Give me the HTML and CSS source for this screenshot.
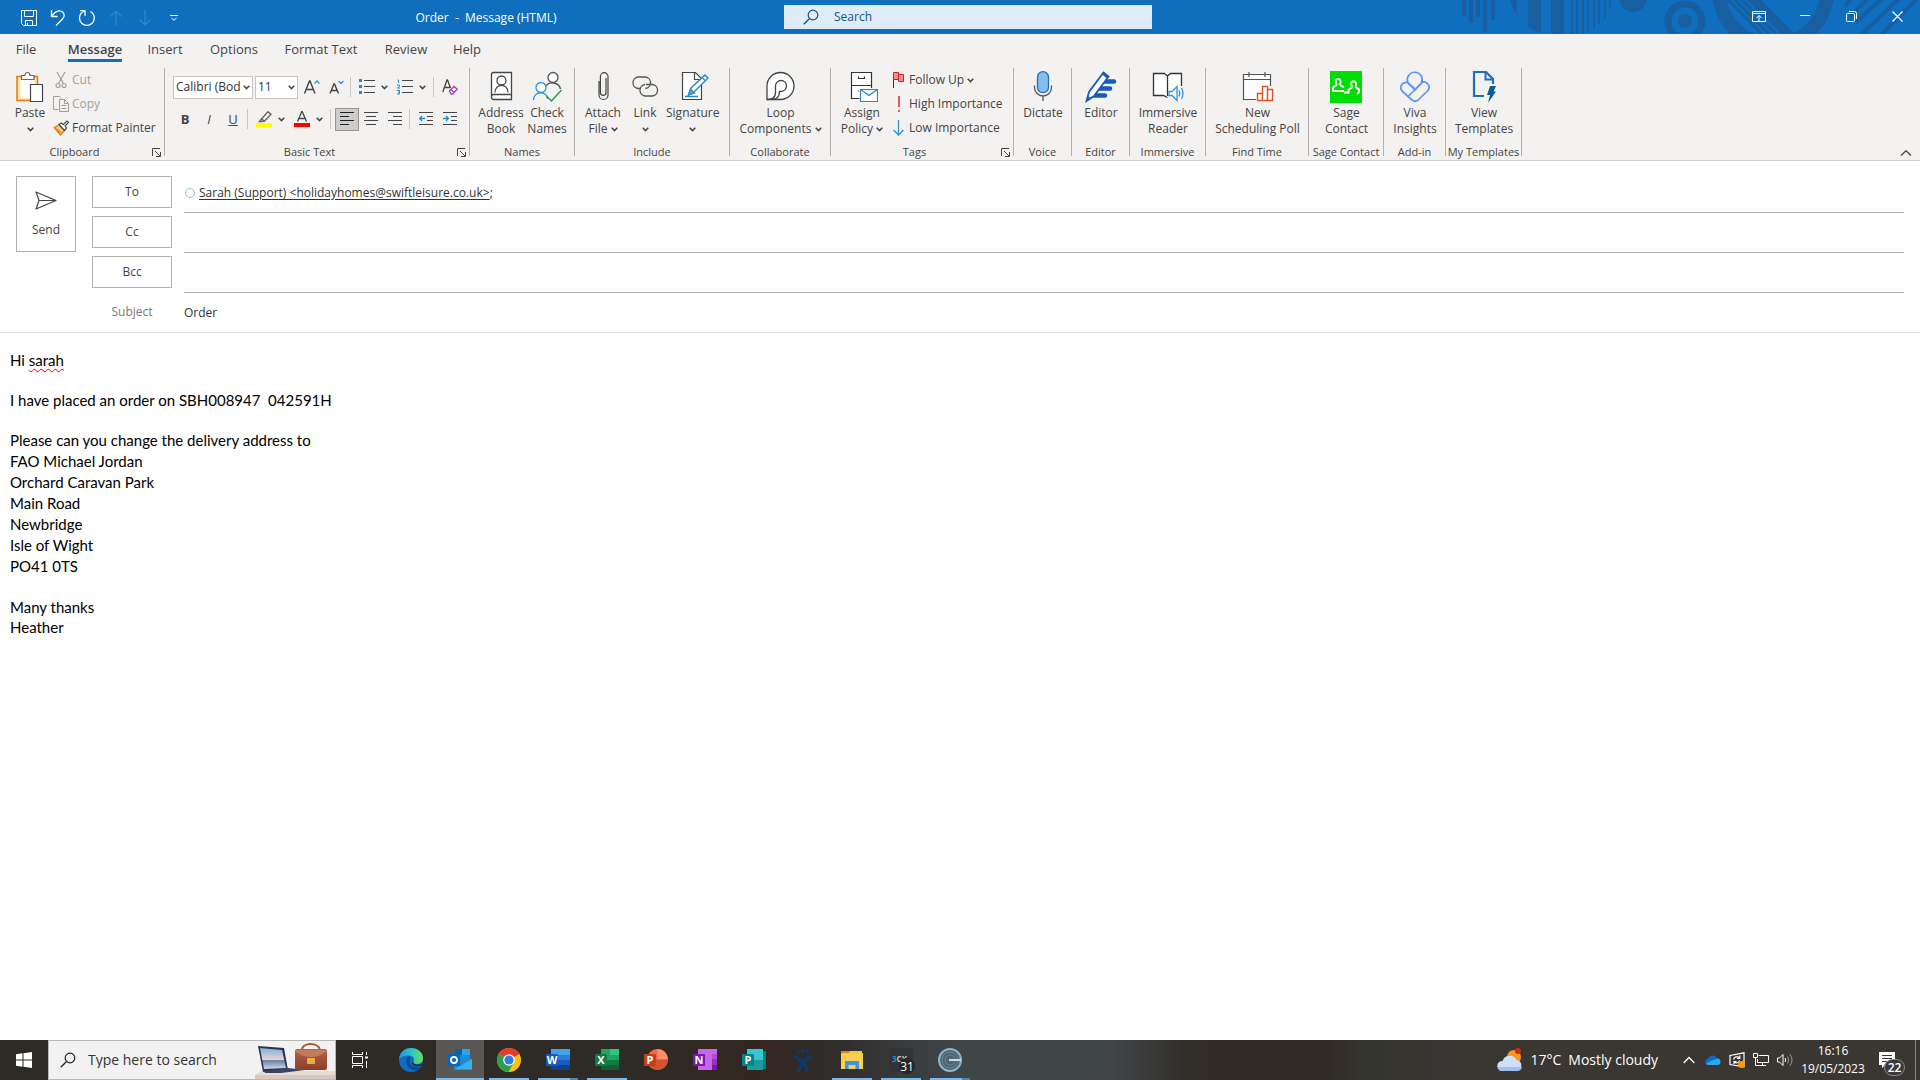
FILE: index.html
```html
<!DOCTYPE html>
<html lang="en">
<head>
<meta charset="utf-8">
<title>Order - Message (HTML)</title>
<link rel="stylesheet" href="styles.css">
</head>
<body>
<svg class="defs" aria-hidden="true">
  <symbol id="chev" viewBox="0 0 7 5"><path d="M.7.8 3.5 3.6 6.3.8" fill="none" stroke="#444" stroke-width="1.5"/></symbol>
  <symbol id="launch" viewBox="0 0 9 9"><path d="M.5 8V.5H8M3 3l5 5M8.500 4v4.500H4" fill="none" stroke="#444"/></symbol>
  <symbol id="lens" viewBox="0 0 16 16"><circle cx="10" cy="6" r="4.800" fill="none" stroke="currentColor" stroke-width="1.200"/><path d="M6.500 9.500.8 15.200" stroke="currentColor" stroke-width="1.300"/></symbol>
</svg>

<header class="titlebar">
  <div class="title-left">
    <div class="qat">
      <button aria-label="Save"><svg width="16" height="16" viewBox="0 0 16 16" fill="none" stroke="#fff"><path d="M.5.5h15v15h-13l-2-2zM3.500.5v6h9v-6M4.500 15.500v-5h7v5M6.500 15v-2"/></svg></button>
      <button aria-label="Undo"><svg width="16" height="16" viewBox="0 0 16 16" fill="none" stroke="#fff" stroke-width="1.300"><path d="M1.500 0v6.500h6M2 6C5 1 10-.5 12.800 2.200c2.500 2.600 1.200 5.500-1 7.500L6 15.500"/></svg></button>
      <button aria-label="Redo"><svg width="18" height="16" viewBox="0 0 18 16" fill="none" stroke="#fff" stroke-width="1.300"><path d="M2 .7h5v5M7 1C3 2.200 1.500 5 1.500 8a7.300 7.300 0 0 0 14.800 0c0-3-1.500-5-3.800-6.500"/></svg></button>
      <button aria-label="Previous item" disabled><svg width="14" height="16" viewBox="0 0 14 16" fill="none" stroke="#2b88d8" stroke-width="1.200"><path d="M7 16V1M1.500 6.500 7 1l5.500 5.500"/></svg></button>
      <button aria-label="Next item" disabled><svg width="14" height="16" viewBox="0 0 14 16" fill="none" stroke="#2b88d8" stroke-width="1.200"><path d="M7 0v15M1.500 9.500 7 15l5.500-5.500"/></svg></button>
      <button aria-label="Customize Quick Access Toolbar"><svg width="8" height="8" viewBox="0 0 8 8" fill="none" stroke="#fff"><path d="M0 1.500h8M1.500 4 4 6.300 6.500 4"/></svg></button>
    </div>
    <h1 class="title">Order&nbsp; -&nbsp; Message (HTML)</h1>
  </div>
  <label class="search"><svg width="16" height="16"><use href="#lens"/></svg><input type="text" placeholder="Search" aria-label="Search"></label>
  <div class="title-right">
    <svg class="decor" width="480" height="34" viewBox="0 0 480 34" aria-hidden="true">
      <clipPath id="ringc"><circle cx="333" cy="-9" r="47"/></clipPath>
      <g fill="#185fa2">
        <path d="M22 0h4v16h-4zM29 0h4v23h-4zM36 0h4v17h-4zM43 0h4v32h-4zM51 0h4v20h-4zM70 0h7v15Q72 8 70 0zM88 0h13v33q-9-3-13-7zM111 0h13v34h-13z"/>
        <path d="M131 0h2v34h-2zM136 0h2v34h-2zM142 0h2v33h-2zM147 0h2v31h-2zM153 0h2v28h-2zM158 0h2v24h-2zM164 0h2v18h-2zM169 0h2v9h-2z"/>
        <circle cx="193" cy="-2" r="14"/><circle cx="245" cy="21" r="7"/>
      </g>
      <circle cx="245" cy="21" r="17" fill="none" stroke="#185fa2" stroke-width="7"/>
      <circle cx="333" cy="-9" r="54" fill="none" stroke="#185fa2" stroke-width="14"/>
      <g clip-path="url(#ringc)" stroke="#185fa2"><path stroke-width="3" d="M280-8l50 50M287-8l50 50M294-8l50 50"/><path stroke-width="10" d="M306-8l50 50"/></g>
      <path stroke="#185fa2" stroke-width="4" d="M416-8l-11 14M436-10l-26 27M452-10l-36 32M468-10l-50 48M486-10l-48 48"/>
    </svg>
    <div class="winctl">
      <button aria-label="Ribbon display options"><svg width="14" height="11" viewBox="0 0 14 11" fill="none" stroke="#fff"><path d="M.5.5h13v10H.5zM.5 2.500h13M7 10V4.500M4.500 7 7 4.500 9.500 7"/></svg></button>
      <button aria-label="Minimize"><svg width="10" height="10" viewBox="0 0 10 10" stroke="#fff"><path d="M0 4.500h10"/></svg></button>
      <button aria-label="Restore"><svg width="11" height="11" viewBox="0 0 11 11" fill="none" stroke="#fff"><rect x=".5" y="2.500" width="8" height="8" rx="1"/><path d="M3 .5h5.500a2 2 0 0 1 2 2V8"/></svg></button>
      <button aria-label="Close"><svg width="11" height="11" viewBox="0 0 11 11" stroke="#fff" stroke-width="1.200"><path d="M.5.5l10 10M10.500.5l-10 10"/></svg></button>
    </div>
  </div>
</header>

<nav class="tabs" aria-label="Ribbon tabs">
  <button>File</button><button class="active"><span>Message</span></button><button>Insert</button><button>Options</button><button>Format Text</button><button>Review</button><button>Help</button>
</nav>

<section class="ribbon" aria-label="Message ribbon">
  <div class="group g-clip">
    <div class="tools">
      <button class="big paste">
        <svg width="32" height="32" viewBox="0 0 32 32"><path d="M3 5.500h20.500V29.500H3z" fill="#fbe3b0" stroke="#e07b10" stroke-width="1.500"/><path d="M6.500 8h14v19h-14z" fill="#fff"/><path d="M7.500 8.500V4.500h3.500c0-4 5-4 5 0h4v4z" fill="#fff" stroke="#666" stroke-width="1.200"/><path d="M16.500 13.500h12v17h-12z" fill="#fff" stroke="#444" stroke-width="1.200"/></svg>
        <span>Paste</span><span><svg class="cv"><use href="#chev"/></svg></span></button>
      <div class="stack">
        <button class="row" disabled><svg width="16" height="16" viewBox="0 0 16 16" fill="none" stroke="#a19f9d" stroke-width="1.200"><path d="M4 0l6.500 11.500M12 0 5.500 11.500"/><circle cx="5" cy="13.500" r="2"/><circle cx="11" cy="13.500" r="2"/></svg>Cut</button>
        <button class="row" disabled><svg width="16" height="16" viewBox="0 0 16 16" fill="none" stroke="#a19f9d"><path d="M5.500 13.500h-5V.5h6l2 2M6.500 3.500h5l4 4v8h-9zM11.500 3.500v4h4M8.500 9.500h5M8.500 12.500h5"/></svg>Copy</button>
        <button class="row"><svg width="16" height="16" viewBox="0 0 16 16"><path d="M1 7.500 6 5l5.500 5.500L7.500 15z" fill="#fbc58f" stroke="#e07b10" stroke-width="1.200"/><path d="M4 8.500l4.500 4.500M3 9l4 4" stroke="#e07b10"/><path d="M6 4.500 8.500 3l1.800 1.700L14 1l1.500 1.300L12 6l1.500 2-2 2.500z" fill="#fff" stroke="#444" stroke-width="1.200"/></svg>Format Painter</button>
      </div>
    </div>
    <div class="cap"><span>Clipboard</span><button aria-label="Clipboard options"><svg width="9" height="9"><use href="#launch"/></svg></button></div>
  </div>

  <div class="group g-basic">
    <div class="tools fmt">
      <div class="line">
        <span class="combo face"><select aria-label="Font"><option>Calibri (Bod</option></select><svg class="cv"><use href="#chev"/></svg></span>
        <span class="combo size"><select aria-label="Font size"><option>11</option></select><svg class="cv"><use href="#chev"/></svg></span>
        <button class="ib" aria-label="Grow font"><svg width="18" height="16" viewBox="0 0 18 16" fill="none"><path d="M1.500 14.500 6.500 2h.5l5 12.500M3 10.500h7.500" stroke="#444" stroke-width="1.400"/><path d="M11.500 4.500 14 2l2.500 2.500" stroke="#2b95d6" stroke-width="1.400"/></svg></button>
        <button class="ib" aria-label="Shrink font"><svg width="18" height="16" viewBox="0 0 18 16" fill="none"><path d="M3 14.500 7 5h.5l4 9.500M4.500 11.500H10" stroke="#444" stroke-width="1.400"/><path d="M11.500 2 14 4.500 16.500 2" stroke="#2b95d6" stroke-width="1.400"/></svg></button>
        <i class="sep"></i>
        <button class="ib" aria-label="Bullets"><svg width="16" height="16" viewBox="0 0 16 16"><path d="M0 0h3v3H0zM0 6h3v3H0zM0 12h3v3H0z" fill="#2b88c8"/><path d="M5 1.500h11M5 7.500h11M5 13.500h11" stroke="#444"/></svg></button>
        <button class="ch" aria-label="Bullet styles"><svg class="cv"><use href="#chev"/></svg></button>
        <button class="ib" aria-label="Numbering"><svg width="16" height="16" viewBox="0 0 16 16" fill="none"><path d="M.5 1h1v3M0 6h2.500v1.500L.5 9H3M0 11.500h2.500v3.500H0M1 13h1.500" stroke="#2b88c8"/><path d="M5 1.500h11M5 7.500h11M5 13.500h11" stroke="#444"/></svg></button>
        <button class="ch" aria-label="Number styles"><svg class="cv"><use href="#chev"/></svg></button>
        <i class="sep"></i>
        <button class="ib" aria-label="Clear formatting"><svg width="16" height="16" viewBox="0 0 16 16" fill="none"><path d="M.8 13 5 1h.5l3 8M2.300 8.500h6" stroke="#444" stroke-width="1.300"/><path d="M7.500 12 12 7.500l3.200 2.700-4.500 4.800H9zM9 10.500l3 3" fill="#fff" stroke="#9a3fb0" stroke-width="1.300"/></svg></button>
      </div>
      <div class="line">
        <button class="ib"><b>B</b></button><button class="ib"><em>I</em></button><button class="ib"><u>U</u></button>
        <i class="sep"></i>
        <button class="ib" aria-label="Highlight"><svg width="16" height="16" viewBox="0 0 16 16"><path d="M5.500 8 12 .8l3 2.500L8.500 10zM5.500 8 3.500 10.500H6l2.500-.5" fill="#fff" stroke="#666" stroke-width="1.500"/><path d="M0 12h16v4H0z" fill="#ff0"/></svg></button>
        <button class="ch" aria-label="Highlight colours"><svg class="cv"><use href="#chev"/></svg></button>
        <button class="ib" aria-label="Font colour"><svg width="16" height="16" viewBox="0 0 16 16"><path d="M3.500 10.500 7.800.5h.4l4.300 10M5 7.500h6" fill="none" stroke="#444" stroke-width="1.300"/><path d="M0 12h16v4H0z" fill="#f00"/></svg></button>
        <button class="ch" aria-label="Font colours"><svg class="cv"><use href="#chev"/></svg></button>
        <i class="sep"></i>
        <button class="ib on" aria-label="Align left"><svg width="14" height="14" viewBox="0 0 14 14" stroke="#222"><path d="M0 .5h14M0 4.500h9M0 8.500h14M0 12.500h9"/></svg></button>
        <button class="ib" aria-label="Align centre"><svg width="14" height="14" viewBox="0 0 14 14" stroke="#444"><path d="M0 .5h14M2 4.500h10M0 8.500h14M2 12.500h10"/></svg></button>
        <button class="ib" aria-label="Align right"><svg width="14" height="14" viewBox="0 0 14 14" stroke="#444"><path d="M0 .5h14M5 4.500h9M0 8.500h14M5 12.500h9"/></svg></button>
        <i class="sep"></i>
        <button class="ib" aria-label="Decrease indent"><svg width="14" height="14" viewBox="0 0 14 14" fill="none" stroke="#444"><path d="M0 .5h14M8 4.500h6M8 8.500h6M0 12.500h14"/><path d="M6 6.500H1M3 4 .7 6.500 3 9" stroke="#2b88c8" stroke-width="1.300"/></svg></button>
        <button class="ib" aria-label="Increase indent"><svg width="14" height="14" viewBox="0 0 14 14" fill="none" stroke="#444"><path d="M0 .5h14M8 4.500h6M8 8.500h6M0 12.500h14"/><path d="M0 6.500h5M3 4l2.300 2.500L3 9" stroke="#2b88c8" stroke-width="1.300"/></svg></button>
      </div>
    </div>
    <div class="cap"><span>Basic Text</span><button aria-label="Basic text options"><svg width="9" height="9"><use href="#launch"/></svg></button></div>
  </div>

  <div class="group g-names">
    <div class="tools">
      <button class="big"><svg width="32" height="32" viewBox="0 0 32 32" fill="none" stroke="#444" stroke-width="1.300"><path d="M6.500 26V3.500q0-2 2-2h18v27h-18q-2 0-2-2.500t2-2.500h18" fill="#fff"/><circle cx="16.500" cy="9.500" r="4.500"/><path d="M10 21.500c0-9.500 13-9.500 13 0"/></svg><span>Address</span><span>Book</span></button>
      <button class="big"><svg width="32" height="32" viewBox="0 0 32 32" fill="none" stroke="#555" stroke-width="1.300"><circle cx="22" cy="6.500" r="5" fill="#fff"/><path d="M15 15c3-5 13-4 14.500 3"/><circle cx="10" cy="16.500" r="5" fill="#fff" stroke="#2b95d6"/><path d="M2.500 29c0-9.500 14-9.500 14-1" stroke="#2b95d6"/><path d="M15.500 25l5 5L30.500 19" stroke="#2ca04a" stroke-width="1.500"/></svg><span>Check</span><span>Names</span></button>
    </div>
    <div class="cap"><span>Names</span></div>
  </div>

  <div class="group g-include">
    <div class="tools">
      <button class="big"><svg width="32" height="32" viewBox="0 0 32 32" fill="none" stroke="#444" stroke-width="1.200"><path d="M19 7v14.500a2.800 2.800 0 0 1-5.600 0V5.500a3.800 3.800 0 0 1 7.600 0V24a4.500 4.500 0 0 1-9 0V10"/></svg><span>Attach</span><span>File <svg class="cv"><use href="#chev"/></svg></span></button>
      <button class="big"><svg width="32" height="32" viewBox="0 0 32 32" fill="none" stroke="#555" stroke-width="1.300"><path d="M12 17.500H9a5.800 5.800 0 0 1 0-11.500h7.500a5.800 5.800 0 0 1 0 11.500"/><path d="M17 13.500h6.500a5.800 5.800 0 0 1 0 11.500H16a5.800 5.800 0 0 1 0-11.500"/></svg><span>Link</span><span><svg class="cv"><use href="#chev"/></svg></span></button>
      <button class="big"><svg width="32" height="32" viewBox="0 0 32 32" fill="none" stroke="#444" stroke-width="1.200"><path d="M5.500 1.500h13l6 6v21h-19z" fill="#fff"/><path d="M17.500 1.500v7h6"/><path d="M8 25.500h13" stroke="#2b88c8" stroke-width="1.500"/><path d="M11.500 24l2.500-7L28 4l3 3-14 14z" fill="#fff" stroke="#2b88c8" stroke-width="1.500"/><path d="M11.500 24l2-6 4 4z" fill="#5aa7dc" stroke="#2b88c8"/><path d="M25.500 7l2.500 2.500" stroke="#2b88c8"/></svg><span>Signature</span><span><svg class="cv"><use href="#chev"/></svg></span></button>
    </div>
    <div class="cap"><span>Include</span></div>
  </div>

  <div class="group g-loop">
    <div class="tools mid">
      <button class="big"><svg width="32" height="32" viewBox="0 0 32 32" fill="none" stroke="#444" stroke-width="1.300"><path d="M2 28.500V15a13.500 13.500 0 1 1 13.500 13.500z" fill="#fff"/><path d="M2 28.500c6 0 8.500-2 8.500-7V15a5.500 5.500 0 1 1 5.500 5.500h-1.500c0 5-3 8-8 8"/></svg><span>Loop</span><span>Components <svg class="cv"><use href="#chev"/></svg></span></button>
    </div>
    <div class="cap"><span>Collaborate</span></div>
  </div>

  <div class="group g-tags">
    <div class="tools">
      <button class="big policy"><svg width="32" height="32" viewBox="0 0 32 32" fill="none" stroke="#333" stroke-width="1.200"><path d="M25.500 17V1.500h-20v26h8" fill="#fff"/><path d="M5.500 14.500h20M12.500 5.500v2h6v-2M12.500 19.500v1"/><path d="M14.500 18.500h17v12h-17zM14.500 18.500l8.500 6 8.500-6" fill="#fff" stroke="#2b88c8"/></svg><span>Assign</span><span>Policy <svg class="cv"><use href="#chev"/></svg></span></button>
      <div class="stack">
        <button class="row"><svg width="16" height="16" viewBox="0 0 16 16"><path d="M3.500 16V1" stroke="#333"/><path d="M3.500.5h5v2h5v7h-5v-2h-5z" fill="#f98b90" stroke="#d6201f"/><path d="M8.500 2v6" stroke="#d6201f"/></svg>Follow Up <svg class="cv"><use href="#chev"/></svg></button>
        <button class="row"><svg width="16" height="16" viewBox="0 0 16 16"><path d="M8 0h2v11H8zM8 14h2v2H8z" fill="#e8565a"/></svg>High Importance</button>
        <button class="row"><svg width="16" height="16" viewBox="0 0 16 16" fill="none" stroke="#2b95d6" stroke-width="1.300"><path d="M8.500 0v15M3.500 10l5 5 5-5"/></svg>Low Importance</button>
      </div>
    </div>
    <div class="cap"><span>Tags</span><button aria-label="Tag options"><svg width="9" height="9"><use href="#launch"/></svg></button></div>
  </div>

  <div class="group g-voice">
    <div class="tools mid"><button class="big"><svg width="32" height="32" viewBox="0 0 32 32"><rect x="10.500" y=".7" width="11" height="21" rx="5.500" fill="#83beec" stroke="#1a70c0" stroke-width="1.300"/><path d="M7.500 14.500v2a8.500 8.500 0 0 0 17 0v-2M16 25v5" fill="none" stroke="#555" stroke-width="1.300"/></svg><span>Dictate</span></button></div>
    <div class="cap"><span>Voice</span></div>
  </div>
  <div class="group g-editor">
    <div class="tools mid"><button class="big"><svg width="32" height="32" viewBox="0 0 32 32"><path d="M17 10.500h12M14 17.500h11M9 24.500h11" stroke="#185abd" stroke-width="4.500" stroke-linecap="round"/><path d="M1.500 30 4 21 18.500 1.500l5 4L9 25z" fill="#fff" stroke="#185abd" stroke-width="1.800"/><path d="M18 1l5.500 4.500L22 7.500 16.500 3zM1.500 30l1.500-5 3 2.500z" fill="#185abd"/></svg><span>Editor</span></button></div>
    <div class="cap"><span>Editor</span></div>
  </div>
  <div class="group g-imm">
    <div class="tools mid"><button class="big"><svg width="32" height="32" viewBox="0 0 32 32" fill="none" stroke="#333" stroke-width="1.300"><path d="M29.500 15V2.500h-11L15.500 5l-3-2.500H1.500v22h10l4 2" fill="#fff"/><path d="M15.500 5v20"/><path d="M17 20.500h3l5-5v14l-5-5h-3z" fill="#fff" stroke="#2b95d6"/><path d="M27 19.500q1.500 3 0 6M29.500 17q3 5.500 0 11" stroke="#2b95d6"/></svg><span>Immersive</span><span>Reader</span></button></div>
    <div class="cap"><span>Immersive</span></div>
  </div>
  <div class="group g-find">
    <div class="tools mid"><button class="big"><svg width="32" height="32" viewBox="0 0 32 32" fill="none" stroke="#555" stroke-width="1.200"><path d="M14 28.500H1.500v-25h27V15" fill="#fff"/><path d="M1.500 8.500h27M7 1v5M23 1v5"/><path d="M15.500 22.500h5v7h-5zM20.500 15.500h5v14h-5zM25.500 18.500h5v11h-5z" fill="#fff" stroke="#e0501e" stroke-width="1.400"/></svg><span>New</span><span>Scheduling Poll</span></button></div>
    <div class="cap"><span>Find Time</span></div>
  </div>
  <div class="group g-sage">
    <div class="tools mid"><button class="big"><svg width="32" height="32" viewBox="0 0 32 32"><path d="M0 0h32v32H0z" fill="#00dc06"/><path d="M14 20H3v-2.500q0-2 3-3c1-.5.5-1.500 0-2.500-2-5.500 5.500-5.500 4.500 0-.5 1.500-1 2 .5 2.700q2 .5 2.500 2.300M14 21.500h4.500v-2q.5-2 3-2.700c1.200-.5.5-1.500 0-2.500-2-5.500 5.500-5.500 4.500 0-.5 1.500-1 2 .5 2.700 3.500 1 3.500 4 .5 6" fill="none" stroke="#fff" stroke-width="1.900"/></svg><span>Sage</span><span>Contact</span></button></div>
    <div class="cap"><span>Sage Contact</span></div>
  </div>
  <div class="group g-viva">
    <div class="tools mid"><button class="big"><svg width="32" height="32" viewBox="0 0 32 32" fill="none" stroke="#5b95f8" stroke-width="1.700" stroke-linejoin="round"><path d="M9 12a7.500 7.500 0 1 1 13.500 0l-6.500 7z"/><path d="M9 11.500c-6-1-9.500 5-5.500 9l9.500 8.500q3 2.500 6 0l9-8.500c5-5 0-11.500-6-9"/><path d="M9 25.500 22.500 12M9 12l7 6"/></svg><span>Viva</span><span>Insights</span></button></div>
    <div class="cap"><span>Add-in</span></div>
  </div>
  <div class="group g-view">
    <div class="tools mid"><button class="big"><svg width="32" height="32" viewBox="0 0 32 32"><path d="M16 25H6V1h12l7 7v5" fill="none" stroke="#1b6fbe" stroke-width="2.200"/><path d="M17.500 1v7.500H25" fill="none" stroke="#1b6fbe" stroke-width="2"/><path d="M22 15h6l-2.500 5.500H28L20 32l2-8h-3z" fill="#0c5a9e"/></svg><span>View</span><span>Templates</span></button></div>
    <div class="cap"><span>My Templates</span></div>
  </div>
  <button class="collapse" aria-label="Collapse the ribbon"><svg width="12" height="6" viewBox="0 0 12 6" fill="none" stroke="#444" stroke-width="1.300"><path d="M1 5.500 6 .8l5 4.700"/></svg></button>
</section>

<section class="envelope" aria-label="Message header">
  <button class="send"><svg width="22" height="19" viewBox="0 0 22 19" fill="none" stroke="#444" stroke-width="1.200" stroke-linejoin="round"><path d="M1 1l20 8.500L1 18l3-8.500zM4 9.500h17"/></svg>Send</button>
  <div class="fields">
    <div class="field"><button class="pick">To</button><div class="value"><i class="presence"></i><a href="#">Sarah (Support) &lt;holidayhomes@swiftleisure.co.uk&gt;</a>;</div></div>
    <div class="field"><button class="pick">Cc</button><input class="value" type="text" aria-label="Cc"></div>
    <div class="field"><button class="pick">Bcc</button><input class="value" type="text" aria-label="Bcc"></div>
    <div class="field subject"><label for="subject">Subject</label><input id="subject" class="value" type="text" value="Order"></div>
  </div>
</section>

<main class="message" contenteditable="true" spellcheck="false">
  <p>Hi <span class="misspelt">sarah</span></p>
  <p>I have placed an order on SBH008947&nbsp; 042591H</p>
  <p class="address">Please can you change the delivery address to<br>FAO Michael Jordan<br>Orchard Caravan Park<br>Main Road<br>Newbridge<br>Isle of Wight<br>PO41 0TS</p>
  <p>Many thanks<br>Heather</p>
</main>

<footer class="taskbar">
  <button class="tb" aria-label="Start"><svg width="16" height="16" viewBox="0 0 16 16" fill="#fff"><path d="M0 2.200 6.500 1.300V7.500H0zM7.500 1.200 16 0v7.500H7.500zM0 8.500h6.500v6.200L0 13.800zM7.500 8.500H16V16l-8.500-1.200z"/></svg></button>
  <label class="tbsearch"><svg width="16" height="16"><use href="#lens"/></svg><input type="text" placeholder="Type here to search" aria-label="Type here to search">
    <svg class="art" width="80" height="38" viewBox="0 0 80 38" aria-hidden="true"><defs><linearGradient id="sky" x2="0" y2="1"><stop stop-color="#7fb0de"/><stop offset=".55" stop-color="#e9d3d0"/><stop offset=".6" stop-color="#67809e"/><stop offset="1" stop-color="#cfdcea"/></linearGradient><linearGradient id="bag" x2="0" y2="1"><stop stop-color="#b5654a"/><stop offset="1" stop-color="#8a3f2a"/></linearGradient></defs><path d="M0 34l6-4h74v8H0z" fill="#e6dcd4"/><path d="M0 34h80v4H0z" fill="#d9c9bd"/><path d="M3 5l26 2 4 22-25 2z" fill="#2c3352"/><path d="M5 7l22 2 4 18-22 1z" fill="url(#sky)"/><path d="M9 30l24-3 17 2-24 3H10z" fill="#3b4266"/><path d="M47 9c0-8 17-8 18 0" fill="none" stroke="#a5573a" stroke-width="2"/><rect x="40" y="8" width="32" height="21" rx="2" fill="url(#bag)"/><path d="M40 10q16 12 32 0v-1H40z" fill="#c47a5c"/><rect x="52" y="17" width="8" height="6" rx="1" fill="#e3b14c"/></svg>
  </label>
  <button class="tb view" aria-label="Task view"><svg width="16" height="16" viewBox="0 0 16 16" fill="none" stroke="#fff"><path d="M.5 0v2.500h10V0M.5 16v-2.500h10V16M.5 4.500h10v7H.5zM14.500 0v3M14.500 9v7"/><path d="M13 4.500h3v2h-3z" fill="#fff" stroke="none"/></svg></button>
  <div class="apps">
    <button class="tb" aria-label="Edge"><svg width="24" height="24" viewBox="0 0 24 24"><defs><linearGradient id="e1"><stop stop-color="#2196e8"/><stop offset=".6" stop-color="#34c6c0"/><stop offset="1" stop-color="#6fe04a"/></linearGradient></defs><circle cx="12" cy="12" r="12" fill="#0f6cc0"/><path d="M0 11C1 3 7 0 12 0c7 0 12 4.500 12 10 0 4-3 6-6.500 6-2.500 0-3.500-1-3-2 1-1 1.200-6-4-6.500C6 7 2 9 0 11z" fill="url(#e1)"/><path d="M10 8c-5 3-3 13 5 14 3 0 6-2 7-4-6 2.500-13 0-11-7q.5-2-1-3z" fill="#0b4a94"/><path d="M14.500 14c-.5 2 3 3.500 9 1.500l-1 2c-5 1.500-9 .5-10-3z" fill="#2e2b28"/></svg></button>
    <button class="tb current" aria-label="Outlook"><svg width="24" height="24" viewBox="0 0 24 24"><path d="M7 1h15v12H7z" fill="#1490df"/><path d="M7 1h7v6H7z" fill="#0f5fa8"/><path d="M14 1h8v6h-8z" fill="#28a8ea"/><path d="M6 11l18 0v10.500H6z" fill="#1a8ad8"/><path d="M24 11 6 21.500h18z" fill="#36b1f0"/><rect x="0" y="6" width="12" height="12" rx="1" fill="#0a64b5"/><circle cx="6" cy="12" r="3" fill="none" stroke="#fff" stroke-width="1.800"/></svg></button>
    <button class="tb run" aria-label="Chrome"><svg width="24" height="24" viewBox="0 0 24 24"><circle cx="12" cy="12" r="12" fill="#fbc116"/><path d="M12 12 1.600 6A12 12 0 0 1 22.400 6z" fill="#e33b2e"/><path d="M1.600 6A12 12 0 0 0 11.500 24l5.300-9.500-4.800-2.500z" fill="#28a14a"/><circle cx="12" cy="12" r="5.800" fill="#fff"/><circle cx="12" cy="12" r="4.600" fill="#2f7de8"/></svg></button>
    <button class="tb run multi" aria-label="Word"><svg width="24" height="24" viewBox="0 0 24 24"><path d="M5 1h19v6H5z" fill="#41a5ee"/><path d="M5 7h19v5H5z" fill="#2b7cd3"/><path d="M5 12h19v5H5z" fill="#185abd"/><path d="M5 17h19v5H5z" fill="#103f91"/><rect y="6" width="12" height="12" rx="1" fill="#185abd"/><text x="6" y="16" class="app-letter">W</text></svg></button>
    <button class="tb run" aria-label="Excel"><svg width="24" height="24" viewBox="0 0 24 24"><path d="M6 1h18v21H6z" fill="#21a366"/><path d="M15 1h9v6h-9z" fill="#33c481"/><path d="M6 12h18v10H6z" fill="#107c41"/><path d="M6 17h18v5H6z" fill="#185c37"/><rect y="6" width="12" height="12" rx="1" fill="#107c41"/><text x="6" y="16" class="app-letter">X</text></svg></button>
    <button class="tb" aria-label="PowerPoint"><svg width="24" height="24" viewBox="0 0 24 24"><circle cx="13.500" cy="11.500" r="10.500" fill="#ed6c47"/><path d="M13.500 1A10.500 10.500 0 0 1 24 11.500H13.500z" fill="#ff8f6b"/><path d="M3 11.500a10.500 10.500 0 0 0 21 0z" fill="#d35230"/><rect y="6" width="12" height="12" rx="1" fill="#c43e1c"/><text x="6" y="16" class="app-letter">P</text></svg></button>
    <button class="tb" aria-label="OneNote"><svg width="24" height="24" viewBox="0 0 24 24"><path d="M5 1h19v21H5z" fill="#ca64ea"/><path d="M19 6h5v5h-5z" fill="#ae4bd5"/><path d="M19 11h5v6h-5z" fill="#9332bf"/><path d="M19 17h5v5h-5z" fill="#7719aa"/><rect y="6" width="12" height="12" rx="1" fill="#7719aa"/><text x="6" y="16" class="app-letter">N</text></svg></button>
    <button class="tb" aria-label="Publisher"><svg width="24" height="24" viewBox="0 0 24 24"><path d="M18 3h6v18h-6z" fill="#038387"/><path d="M5 1h16v21H5z" fill="#1a9ba1"/><path d="M5 1h16v11H5z" fill="#37c6d0"/><rect y="6" width="12" height="12" rx="1" fill="#038387"/><text x="6" y="16" class="app-letter">P</text></svg></button>
    <button class="tb" aria-label="Jira"><svg width="24" height="24" viewBox="0 0 24 24" fill="none" stroke="#0b3a70" stroke-width="3"><circle cx="12" cy="2.500" r="1" stroke-width="2"/><circle cx="7.500" cy="4" r=".7" stroke-width="2"/><circle cx="16.500" cy="4" r=".7" stroke-width="2"/><path d="M4 8c2 4 6 2 8 6s4 5 4.500 10M20 8c-2 4-6 2-8 6s-4 5-4.500 10"/></svg></button>
    <button class="tb run" aria-label="File Explorer"><svg width="24" height="24" viewBox="0 0 24 24"><path d="M1 3h9v5H1z" fill="#dc9a10"/><path d="M1 5h22v16H1z" fill="#fbcf55"/><path d="M1 4.500h8l1.500-1.500H22v3H1z" fill="#f9c636"/><path d="M1 3h9l-1.500 2H1z" fill="#d48f0a"/><path d="M5 13h14v8h-3.500v-4h-7v4H5z" fill="#3c96e0"/></svg></button>
    <button class="tb run" aria-label="3CX, 31 notifications"><svg class="spill" width="24" height="24" viewBox="0 0 24 24"><path d="M0 0h24v24H0z" fill="#323335"/><text x="3" y="14" class="cx">3<tspan fill="#ccc">CX</tspan></text><circle cx="18" cy="18" r="8" fill="#26262c"/><text x="18" y="23" class="badge">31</text></svg></button>
    <button class="tb run multi" aria-label="Remote client"><svg width="24" height="24" viewBox="0 0 24 24" fill="none" stroke="#8db4cc"><circle cx="12" cy="12" r="11" stroke-width="2" fill="#4e6472"/><circle cx="12" cy="12" r="8" stroke="#6d8796"/><circle cx="12" cy="12" r="5" stroke="#6d8796"/><path d="M11 12h12" stroke="#c8dbe6" stroke-width="2"/></svg></button>
  </div>
  <button class="weather"><svg width="26" height="26" viewBox="0 0 26 26"><circle cx="17" cy="10" r="7" fill="#f59a1c"/><circle cx="21" cy="4" r="3" fill="#cf2a1a"/><path d="M5 24a5 5 0 0 1 .5-10 7.500 7.500 0 0 1 14-1A5.600 5.600 0 0 1 20 24z" fill="#cfdff8"/><path d="M5 24a4 4 0 0 1-4-4h24a5 5 0 0 1-5 4z" fill="#9fbff0"/></svg><span>17°C</span><span>Mostly cloudy</span></button>
  <div class="tray">
    <button aria-label="Show hidden icons"><svg width="12" height="8" viewBox="0 0 12 8" fill="none" stroke="#fff" stroke-width="1.300"><path d="M.7 7 6 1.500 11.300 7"/></svg></button>
    <button aria-label="OneDrive"><svg width="16" height="12" viewBox="0 0 16 12"><path d="M3.500 11A3.300 3.300 0 0 1 3 4.500 5 5 0 0 1 12 4a3.600 3.600 0 0 1 .5 7z" fill="#0f6cbd"/><path d="M3.500 11Q2 11 1 9.500L8 6l5-1.500a3.300 3.300 0 0 1-.5 6.500z" fill="#28a8ea"/></svg></button>
    <button aria-label="Updates"><svg width="16" height="16" viewBox="0 0 16 16" fill="none" stroke="#fff" stroke-width="1.200"><path d="M1 3.500 15 .8v14L1 12.500z"/><path d="M4.500 7.500C5 4.500 9 4 10.500 6M10.800 3.500V6.500H8M10.500 8.500C10 11 7 11.500 5.500 10M5 12V9.500h2.500"/><circle cx="12.500" cy="12.500" r="3.500" fill="#f90" stroke="none"/></svg></button>
    <button aria-label="Network"><svg width="16" height="14" viewBox="0 0 16 14" fill="none" stroke="#fff"><path d="M5.500 2.500h10v7h-11V6M7 12.500h6M9.500 9.500v3M.5.5h4v4h-4zM2.500 5v7.500H7"/></svg></button>
    <button aria-label="Volume"><svg width="16" height="14" viewBox="0 0 16 14" fill="none" stroke="#fff"><path d="M.5 5h2l3.500-3.500v11L2.500 9h-2zM8 5q1.500 2 0 4"/><path d="M10.500 3.500q2.500 3.500 0 7M13 1.500q4 5.500 0 11" stroke="#999"/></svg></button>
  </div>
  <button class="clock"><span>16:16</span><span>19/05/2023</span></button>
  <button class="notes" aria-label="22 notifications"><svg width="28" height="32" viewBox="0 0 28 32"><path d="M0 8h16v13H6l-3 3v-3H0z" fill="#fff"/><path d="M3 11.500h10M3 14.500h10M3 17.500h7" stroke="#3a3733"/><rect x="5.500" y="15.500" width="20" height="16" rx="8" fill="#3a3a3c" stroke="#8c8c8c"/><text x="15.500" y="28" class="badge strong">22</text></svg></button>
</footer>
</body>
</html>
```
FILE: styles.css
```css
* { box-sizing: border-box; }
html, body { height: 100%; }
body {
  margin: 0;
  min-height: 100vh;
  display: flex;
  flex-direction: column;
  background: #fff;
  color: #444;
  font: 12px/16px "Open Sans", "Noto Sans", sans-serif;
}
button, input, select { font: inherit; color: inherit; }
button { border: 0; padding: 0; background: none; white-space: nowrap; }
input { border: 0; padding: 0; background: none; min-width: 0; outline: 0; }
svg { flex: none; display: block; }
.defs { position: absolute; width: 0; height: 0; }
.cv { width: 7px; height: 5px; display: inline-block; vertical-align: middle; }

/* Title bar */
.titlebar {
  display: grid;
  grid-template-columns: minmax(0, 784fr) 368px minmax(0, 768fr);
  align-items: center;
  height: 34px;
  flex: none;
  background: #106ebe;
  color: #fff;
}
.title-left { display: flex; align-items: center; }
.qat { display: flex; padding-left: 14px; }
.qat button { width: 29px; height: 34px; padding-top: 1px; display: grid; place-items: center; }
.title { flex: 1; margin: 0; padding-top: 2px; font-size: 12px; font-weight: 400; text-align: center; }
.search { display: flex; align-items: center; gap: 15px; height: 24px; padding-left: 19px; background: #deecf9; color: #1b5283; }
.search input { flex: 1; }
.search input::placeholder { color: #1b5283; opacity: 1; }
.title-right { display: grid; justify-items: end; height: 34px; }
.decor, .winctl { grid-area: 1 / 1; }
.winctl { display: flex; z-index: 1; }
.winctl button { width: 46px; height: 32px; display: grid; place-items: center; }

/* Tabs */
.tabs { display: grid; grid-template-columns: 52px 86px 54px 84px 90px 80px 42px; flex: none; height: 30px; background: #f3f2f1; font-size: 13px; line-height: 20px; }
.tabs button { display: flex; justify-content: center; padding-top: 5px; }
.tabs .active { font-weight: 600; }
.tabs .active span { height: 23px; border-bottom: 3px solid #106ebe; }

/* Ribbon */
.ribbon { display: flex; flex: none; height: 97px; padding-top: 4px; background: #f3f2f1; border-bottom: 1px solid #d2d0ce; }
.group { display: flex; flex-direction: column; flex: none; background: linear-gradient(#b3b0ad, #b3b0ad) right top / 1px 88px no-repeat; }
.tools { display: flex; flex: 1; }
.mid { justify-content: center; }
.cap { display: flex; height: 16px; padding-right: 1px; font-size: 11px; }
.cap span { flex: 1; text-align: center; white-space: nowrap; }
.cap button { width: 15px; display: grid; place-items: center; }
.big { display: flex; flex-direction: column; align-items: center; padding-top: 3px; }
.big > svg { margin-bottom: 2px; }
.big span { height: 16px; }
.stack { display: flex; flex-direction: column; }
.row { display: flex; align-items: center; gap: 3px; height: 24px; }
.row:disabled { color: #a19f9d; }
.g-clip { width: 165px; }
.paste { width: 46px; margin-left: 7px; }
.g-basic { width: 305px; }
.g-names { width: 105px; }
.g-names .tools { padding-left: 8px; }
.g-names .big { width: 46px; }
.g-include { width: 155px; }
.g-include .tools { padding-left: 7px; }
.g-include .big { min-width: 42px; }
.g-loop { width: 101px; }
.g-tags { width: 183px; }
.policy { width: 48px; margin: 0 4px 0 7px; }
.g-voice, .g-editor { width: 58px; }
.g-imm, .g-view { width: 76px; }
.g-find { width: 103px; }
.g-sage { width: 75px; }
.g-viva { width: 62px; }
.collapse { align-self: flex-end; margin: 0 8px 4px auto; }

.fmt { flex-direction: column; gap: 8px; padding: 7px 0 0 8px; }
.line { display: flex; align-items: center; height: 24px; }
.combo { display: grid; align-items: center; height: 23px; margin-right: 2px; }
.combo select { grid-area: 1 / 1; width: 100%; height: 23px; padding: 0 2px; appearance: none; background: #fff; border: 1px solid #c8c6c4; border-radius: 0; color: #333; }
.combo .cv { grid-area: 1 / 1; justify-self: end; margin-right: 3px; }
.face { width: 80px; }
.size { width: 43px; }
.ib { width: 24px; height: 23px; display: grid; place-items: center; flex: none; font-size: 13px; }
.ib.on { background: #cfcdcb; border: 1px solid #979593; }
.ch { width: 10px; margin-right: 4px; height: 23px; }
.sep { width: 5px; height: 20px; margin-right: 2px; background: linear-gradient(#c8c6c4, #c8c6c4) center / 1px 100% no-repeat; }

/* Address block */
.envelope { display: flex; gap: 16px; flex: none; padding: 12px 16px 0; border-bottom: 1px solid #e1dfdd; }
.send { width: 60px; height: 76px; margin-top: 3px; display: flex; flex-direction: column; align-items: center; justify-content: center; gap: 12px; border: 1px solid #b3b0ad; }
.fields { flex: 1; }
.field { display: flex; gap: 12px; height: 40px; }
.pick { width: 80px; height: 32px; margin-top: 3px; border: 1px solid #b3b0ad; }
.value { flex: 1; display: flex; align-items: center; border-bottom: 1px solid #b3b0ad; color: #333; }
.value a { color: inherit; text-underline-offset: 2px; }
.presence { width: 10px; height: 10px; margin: 0 4px 0 1px; border: 1px solid #9cc3d5; border-radius: 50%; }
.subject { height: 39px; }
.subject label { width: 80px; line-height: 38px; text-align: center; color: #7a7876; }
.subject .value { border: 0; }

/* Message text */
.message { flex: 1; padding: 17px 10px; outline: 0; color: #000; font: 15px/20px Lato, "Open Sans", sans-serif; }
.message p { margin: 0 0 20px; }
.message .address { line-height: 21px; }
.misspelt { text-decoration: underline wavy #f00 1px; text-underline-offset: 2px; text-decoration-skip-ink: none; }

/* Taskbar */
.taskbar { display: flex; flex: none; height: 40px; color: #fff; background: linear-gradient(90deg, #2d2a25 0, #2e2b27 32%, #33271f 40%, #2f2c2a 43%, #404548 50%, #414548 58%, #302c28 62%, #302a25 69%, #34342f 71%, #3a3733 77%, #3a3733 100%); }
.tb { width: 48px; height: 40px; display: grid; place-items: center; }
.tbsearch { display: flex; align-items: center; width: 288px; padding-left: 11px; gap: 12px; background: #f2f2f2; border: 1px solid #b8b8b8; color: #222; font-size: 14px; }
.tbsearch input { flex: 1; }
.tbsearch input::placeholder { color: #333; opacity: 1; }
.tb.view { width: 48px; }
.apps { display: flex; gap: 1px; padding-left: 3px; }
.current { background: #5a5854 linear-gradient(#76b9ed, #76b9ed) center bottom / 100% 2px no-repeat; }
.run { background: linear-gradient(#76b9ed, #76b9ed) center bottom / 40px 2px no-repeat; }
.multi { background: linear-gradient(90deg, #76b9ed 32px, #5287b3 32px) center bottom / 40px 2px no-repeat; }
.spill { overflow: visible; }
.app-letter { font: 700 11px "Open Sans", sans-serif; fill: #fff; text-anchor: middle; }
.cx { font: 700 8px "Open Sans", sans-serif; fill: #1c8fd0; }
.badge { font: 12px "Open Sans", sans-serif; fill: #fff; text-anchor: middle; }
.strong { font-weight: 600; }
.weather { display: flex; align-items: center; gap: 7px; margin-left: auto; padding-right: 19px; font-size: 14px; }
.tray { display: flex; }
.tray button { width: 24px; display: grid; place-items: center; }
.clock { width: 72px; display: flex; flex-direction: column; align-items: center; justify-content: center; gap: 2px; }
.notes { width: 47px; margin-right: 4px; padding-left: 10px; display: grid; place-items: center start; border-right: 1px solid #8a8886; }
```
